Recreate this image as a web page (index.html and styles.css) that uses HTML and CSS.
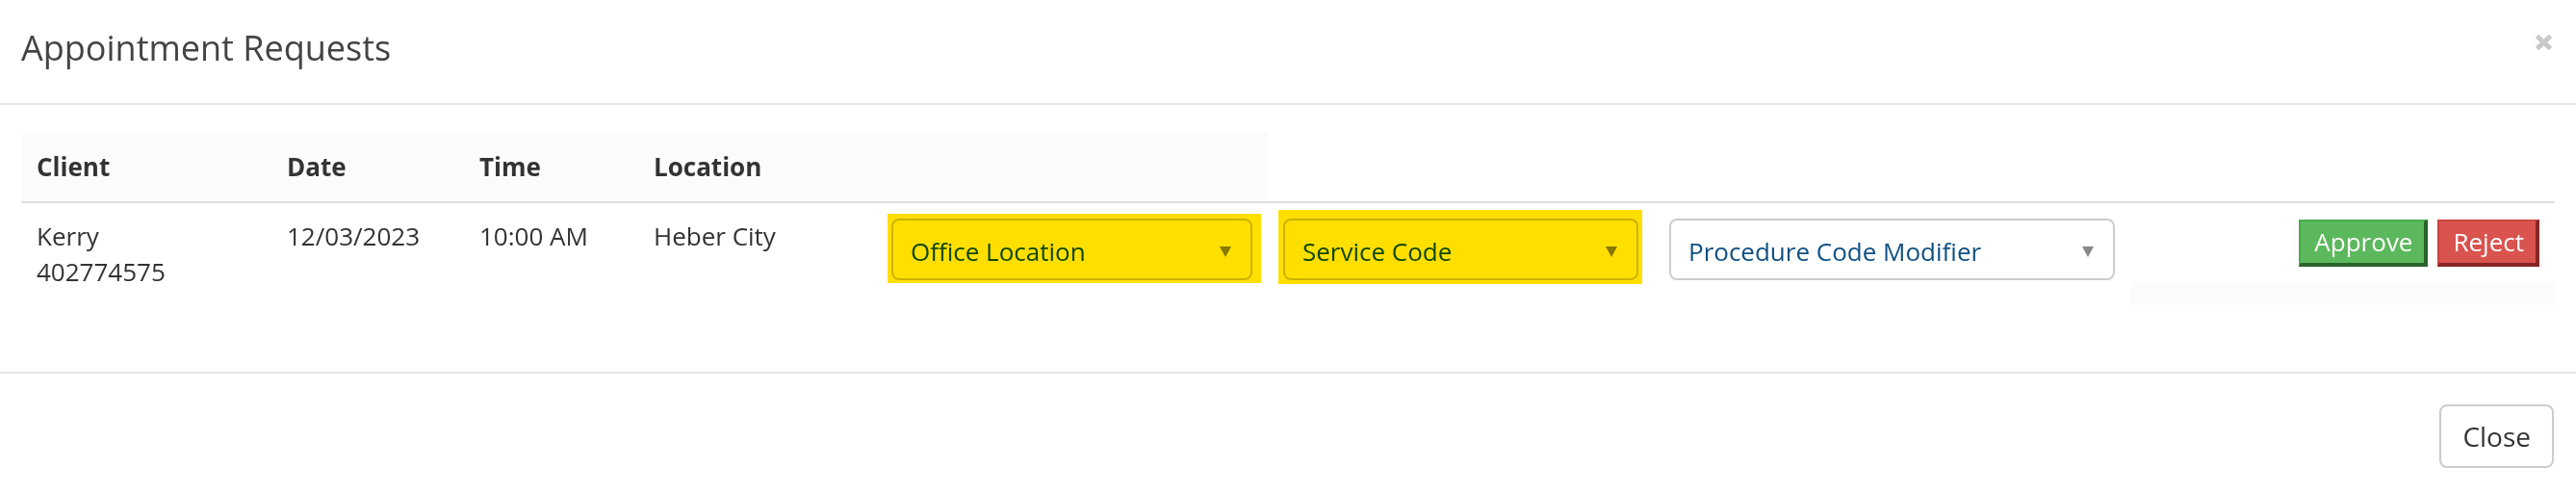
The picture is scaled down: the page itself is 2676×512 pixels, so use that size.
FILE: index.html
```html
<!DOCTYPE html>
<html lang="en">
<head>
<meta charset="utf-8">
<title>Appointment Requests</title>
<link rel="stylesheet" href="styles.css">
</head>
<body>
<div class="modal">
  <div class="modal-header">
    <h4 class="modal-title">Appointment Requests</h4>
    <button class="close-x" type="button" aria-label="Close">
      <svg width="19" height="18" viewBox="0 0 19 18"><path d="M2.5 2.5L16.5 15.5M16.5 2.5L2.5 15.5" stroke="#c8c8c8" stroke-width="5"/></svg>
    </button>
  </div>
  <div class="modal-body">
    <div class="grid">
      <div class="th shaded">Client</div>
      <div class="th shaded">Date</div>
      <div class="th shaded">Time</div>
      <div class="th shaded">Location</div>
      <div class="th shaded"></div>
      <div class="th"></div>
      <div class="th"></div>
      <div class="th last"></div>

      <div class="td">Kerry<br>402774575</div>
      <div class="td">12/03/2023</div>
      <div class="td">10:00 AM</div>
      <div class="td">Heber City</div>
      <div class="td">
        <div class="hl hl-office">
          <div class="select"><span>Office Location</span><svg class="caret" width="12" height="11" viewBox="0 0 12 11"><path d="M0 0H12L6 11Z" fill="#888"/></svg></div>
        </div>
      </div>
      <div class="td">
        <div class="hl hl-service">
          <div class="select"><span>Service Code</span><svg class="caret" width="12" height="11" viewBox="0 0 12 11"><path d="M0 0H12L6 11Z" fill="#888"/></svg></div>
        </div>
      </div>
      <div class="td">
        <div class="select"><span>Procedure Code Modifier</span><svg class="caret" width="12" height="11" viewBox="0 0 12 11"><path d="M0 0H12L6 11Z" fill="#888"/></svg></div>
      </div>
      <div class="td actions">
        <div class="btns">
          <button class="btn-act approve" type="button">Approve</button>
          <button class="btn-act reject" type="button">Reject</button>
        </div>
        <div class="strip"></div>
      </div>
    </div>
  </div>
  <div class="modal-footer">
    <button class="btn-close" type="button">Close</button>
  </div>
</div>
</body>
</html>
```
FILE: styles.css
```css
html, body {
  margin: 0;
  padding: 0;
  background: #fff;
}
body {
  font-family: "Open Sans", "Noto Sans", sans-serif;
  font-size: 26px;
  line-height: 1.42857;
  color: #333;
}
.modal {
  width: 2676px;
}
.modal-header {
  box-sizing: border-box;
  height: 109px;
  padding: 24px 24px 0 22px;
  border-bottom: 2px solid #e5e5e5;
  display: flex;
  justify-content: space-between;
  align-items: flex-start;
}
.modal-title {
  margin: 0;
  font-size: 36px;
  font-weight: 400;
  line-height: 51px;
  color: #444;
}
.close-x {
  border: 0;
  background: none;
  padding: 0;
  margin-top: 11px;
  display: flex;
  cursor: pointer;
}
.modal-body {
  padding: 29px 22px 69px;
}
.grid {
  display: grid;
  grid-template-columns: 260px 200px 181px 247px 407px 401px 495px 441px;
}
.th {
  padding: 17px 16px;
  font-weight: 700;
  line-height: 37px;
  border-bottom: 2px solid #ddd;
  color: #333;
}
.th.shaded {
  background: #fbfbfb;
}
.td {
  padding: 16px;
  line-height: 37px;
  color: #333;
}
.hl {
  background: #ffdf00;
}
.hl-office {
  margin: -5px -9px -3px -4px;
  padding: 5px 9px 3px 4px;
}
.hl-service {
  margin: -9px -4px -4px -5px;
  padding: 9px 4px 4px 5px;
}
.select {
  box-sizing: border-box;
  height: 64px;
  border: 2px solid #ccc;
  border-radius: 8px;
  background: #fff;
  padding: 4px 20px 0 18px;
  display: flex;
  align-items: center;
  justify-content: space-between;
  color: #0f5082;
  font-size: 26px;
  mix-blend-mode: multiply;
}
.caret {
  flex: none;
}
.td.actions {
  padding: 0;
  display: flex;
  flex-direction: column;
}
.btns {
  padding: 17px 16px 16px;
  display: flex;
  justify-content: flex-end;
  gap: 10px;
}
.strip {
  flex: 1;
  background: #fcfcfc;
}
.btn-act {
  font-family: "Open Sans", "Noto Sans", sans-serif;
  font-size: 26px;
  line-height: 37px;
  color: #fff;
  padding: 3px 12px 3px 14px;
  border-style: solid;
  border-width: 2px 4px 4px 2px;
  border-radius: 0;
  cursor: pointer;
}
.approve {
  background: #5cb85c;
  border-color: #4cab4c #2a622a #2a622a #4cab4c;
}
.reject {
  background: #d9534f;
  border-color: #cf423e #862624 #862624 #cf423e;
}
.modal-footer {
  border-top: 2px solid #e5e5e5;
  padding: 32px 23px 26px;
  display: flex;
  justify-content: flex-end;
}
.btn-close {
  font-family: "Open Sans", "Noto Sans", sans-serif;
  font-size: 28px;
  line-height: 40px;
  color: #333;
  background: #fff;
  border: 2px solid #ccc;
  border-radius: 8px;
  padding: 11px 22px;
  cursor: pointer;
}
```
